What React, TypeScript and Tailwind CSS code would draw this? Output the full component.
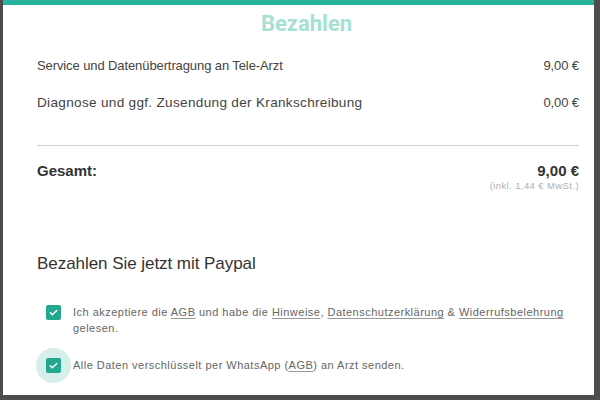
import React from 'react';

const teal = 'bg-[#23a88f]';

function Check({ halo }: { halo?: boolean }) {
    return (
        <div className="relative w-[15px] h-[15px] shrink-0">
            {halo && <div className="absolute -left-[10px] -top-[10px] w-[35px] h-[35px] rounded-full bg-[#d5efea]" />}
            <div className={`relative w-[15px] h-[15px] rounded-[2px] ${teal} flex items-center justify-center`}>
                <svg width="11" height="11" viewBox="0 0 24 24" fill="none" stroke="white" strokeWidth="3.2" strokeLinecap="round" strokeLinejoin="round">
                    <path d="M5 12.5l4.5 4.5L19 7.5" />
                </svg>
            </div>
        </div>
    );
}

function Link({ children }: { children: React.ReactNode }) {
    return <span className="underline underline-offset-2 decoration-[#999]">{children}</span>;
}

export default function App() {
    return (
        <div className="w-[600px] h-[400px] bg-[#4d4d4d] pl-[3px] pr-[6px] pb-[5px] font-[Liberation_Sans,Arial,sans-serif]">
            <div className="relative h-full bg-white border-t-[5px] border-[#26b39b] overflow-hidden">
                <div className="absolute left-[303px] -top-[5px] w-[2px] h-[5px] bg-white" />
                <h1 className="text-center font-[Roboto,sans-serif] font-bold text-[22px] leading-[26px] text-[#a6e0d5] mt-[6px] ml-[16px]">
                    Bezahlen
                </h1>
                <div className="pl-[34px] pr-[15px]">
                    <div className="flex justify-between text-[13px] text-[#444] mt-[19px] tracking-[-0.1px]">
                        <span>Service und Datenübertragung an Tele-Arzt</span>
                        <span>9,00 €</span>
                    </div>
                    <div className="flex justify-between items-baseline text-[13px] text-[#444] mt-[17px]">
                        <span className="text-[13.6px] tracking-[0.3px]">Diagnose und ggf. Zusendung der Krankschreibung</span>
                        <span className="tracking-[-0.1px]">0,00 €</span>
                    </div>
                    <div className="h-px bg-[#d0d0d0] mt-[32px]" />
                    <div className="flex justify-between text-[15px] font-bold text-[#333] mt-[14px]">
                        <span>Gesamt:</span>
                        <span>9,00 €</span>
                    </div>
                    <div className="text-right text-[9.5px] text-[#b0b0b0] -mt-[3px] tracking-[0.4px]">(inkl. 1,44 € MwSt.)</div>
                    <h2 className="text-[17px] text-[#333] mt-[57px] tracking-[-0.05px]">Bezahlen Sie jetzt mit Paypal</h2>
                    <div className="flex gap-[12px] pl-[9px] mt-[28px] text-[11px] leading-[16px] text-[#666] tracking-[0.48px]">
                        <div className="pt-[1px]"><Check /></div>
                        <p>
                            Ich akzeptiere die <Link>AGB</Link> und habe die <Link>Hinweise</Link>, <Link>Datenschutzerklärung</Link> &amp; <Link>Widerrufsbelehrung</Link> gelesen.
                        </p>
                    </div>
                    <div className="flex gap-[12px] pl-[9px] mt-[21px] text-[11px] leading-[16px] text-[#666] tracking-[0.48px]">
                        <div className="pt-[1px]"><Check halo /></div>
                        <p className="relative">
                            Alle Daten verschlüsselt per WhatsApp (<Link>AGB</Link>) an Arzt senden.
                        </p>
                    </div>
                </div>
            </div>
        </div>
    );
}
